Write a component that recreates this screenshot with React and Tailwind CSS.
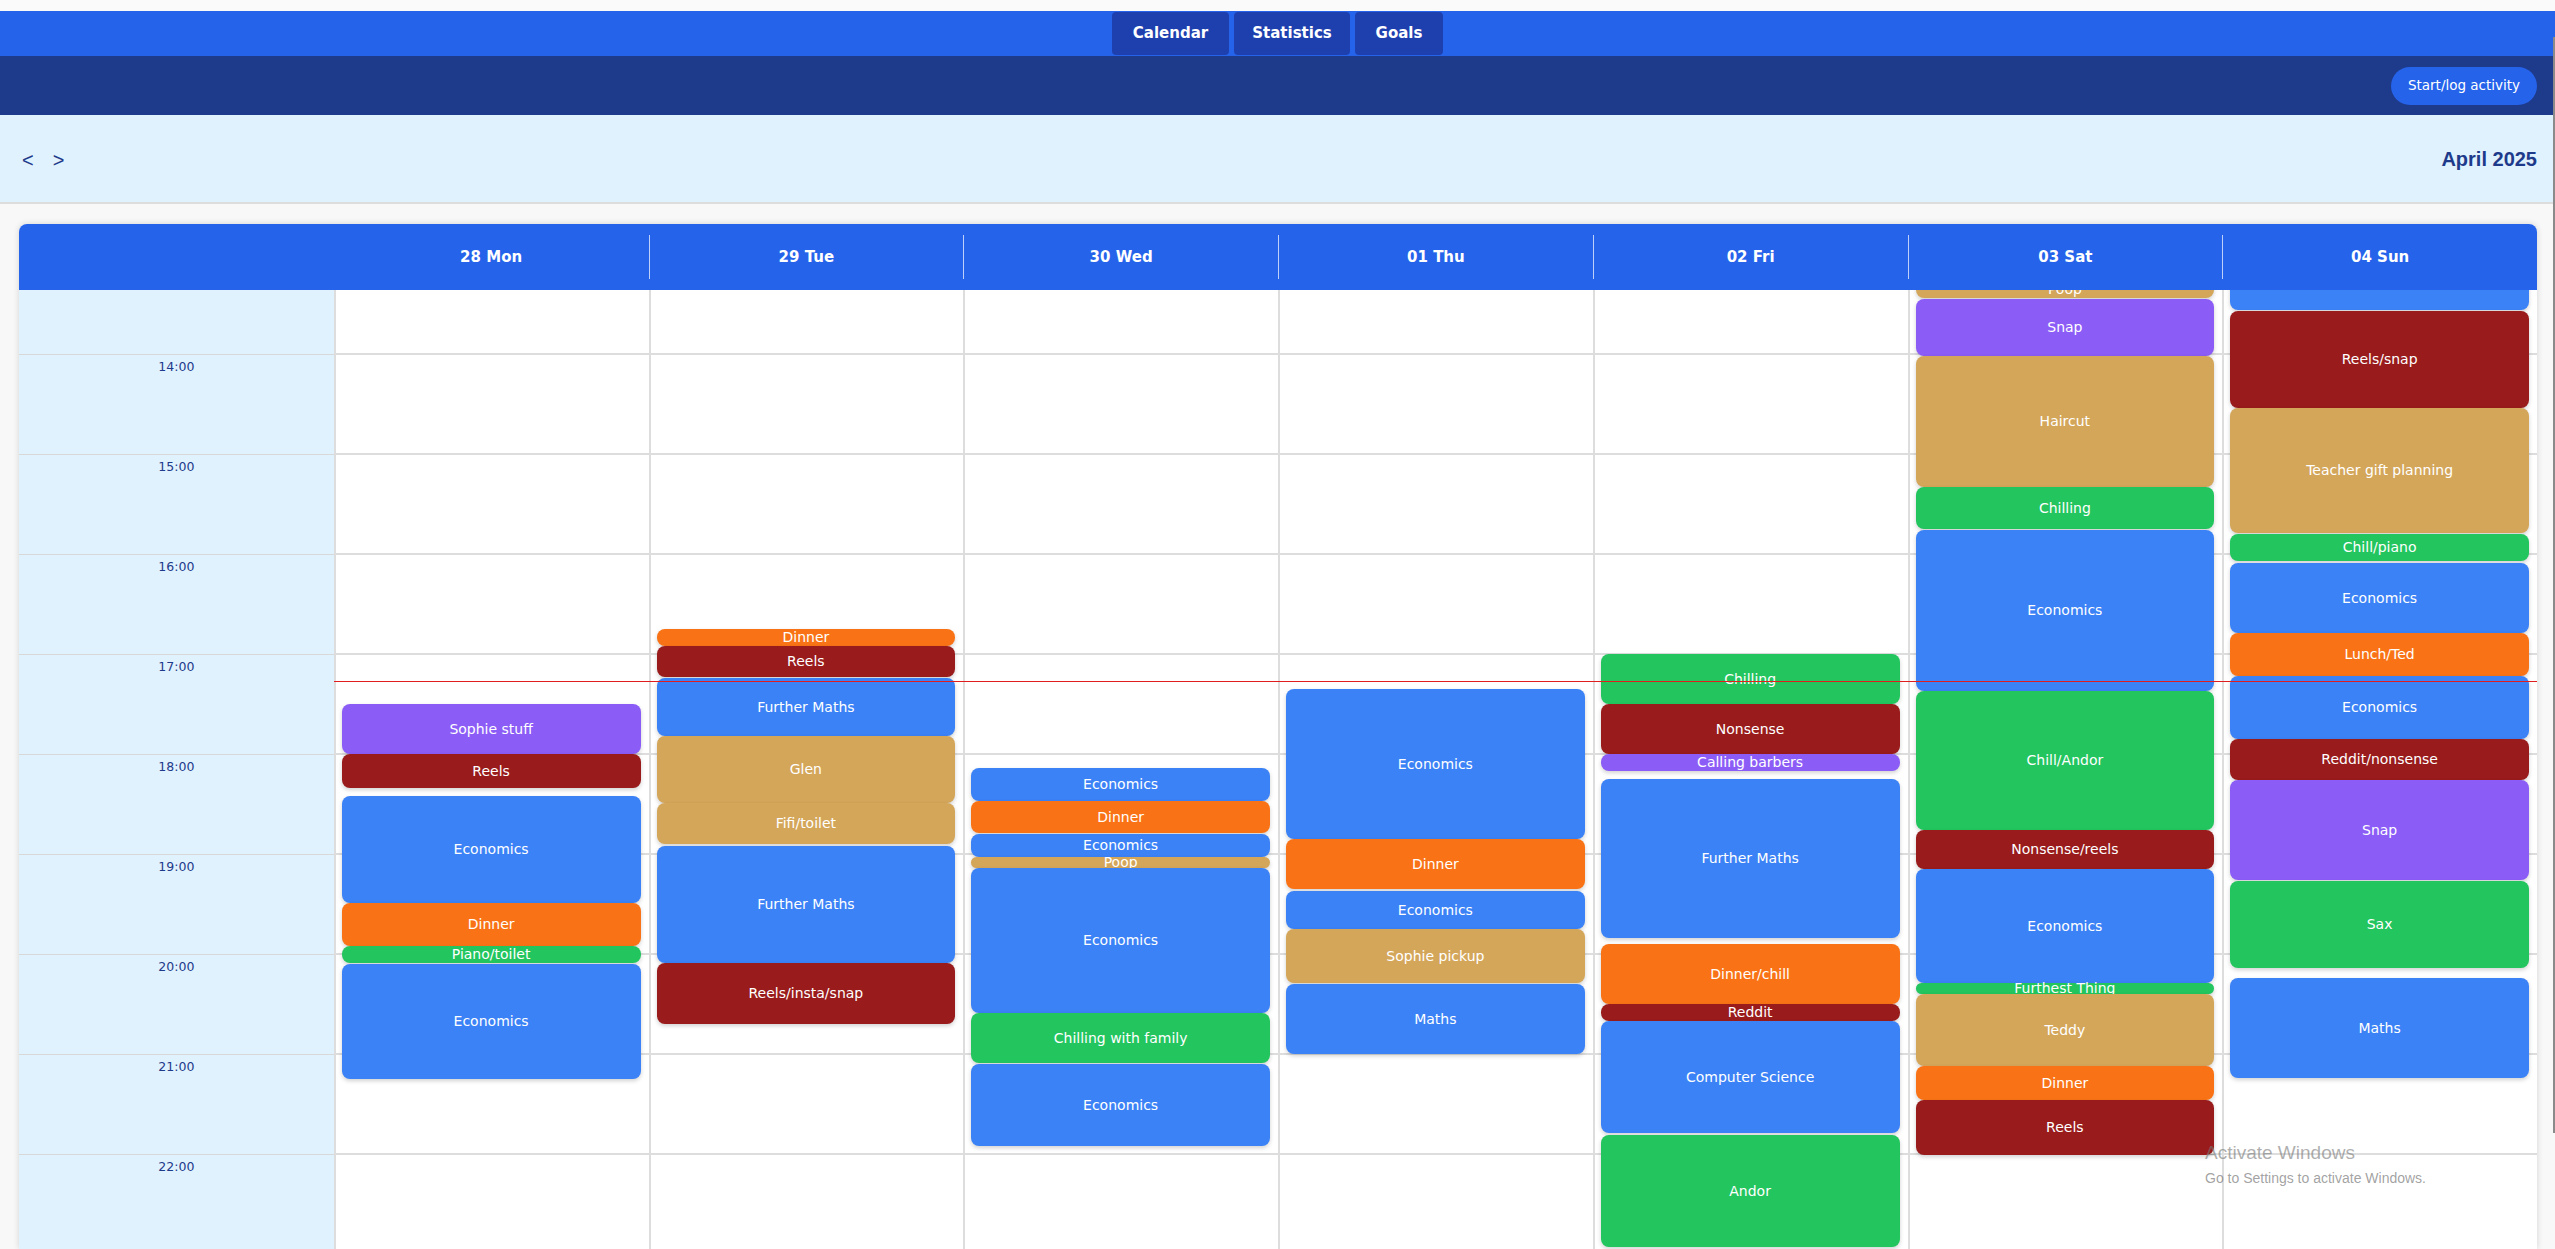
import React from "react";

const O = 255;

const COLORS = {
  blue: "bg-[#3b82f6]",
  orange: "bg-[#f97316]",
  green: "bg-[#22c55e]",
  purple: "bg-[#8b5cf6]",
  red: "bg-[#991b1b]",
  tan: "bg-[#d4a65a]",
};

const DAYS = [
  {
    label: "28 Mon",
    events: [
      ["Sophie stuff", "purple", 704, 754],
      ["Reels", "red", 754, 788],
      ["Economics", "blue", 796, 903],
      ["Dinner", "orange", 903, 946],
      ["Piano/toilet", "green", 946, 963],
      ["Economics", "blue", 964, 1079],
    ],
  },
  {
    label: "29 Tue",
    events: [
      ["Dinner", "orange", 629, 646],
      ["Reels", "red", 646, 677],
      ["Further Maths", "blue", 678, 736],
      ["Glen", "tan", 736, 803],
      ["Fifi/toilet", "tan", 803, 844],
      ["Further Maths", "blue", 846, 963],
      ["Reels/insta/snap", "red", 963, 1024],
    ],
  },
  {
    label: "30 Wed",
    events: [
      ["Economics", "blue", 768, 801],
      ["Dinner", "orange", 801, 833],
      ["Economics", "blue", 834, 857],
      ["Poop", "tan", 857, 868],
      ["Economics", "blue", 868, 1013],
      ["Chilling with family", "green", 1013, 1063],
      ["Economics", "blue", 1064, 1146],
    ],
  },
  {
    label: "01 Thu",
    events: [
      ["Economics", "blue", 689, 839],
      ["Dinner", "orange", 839, 889],
      ["Economics", "blue", 891, 929],
      ["Sophie pickup", "tan", 929, 983],
      ["Maths", "blue", 984, 1054],
    ],
  },
  {
    label: "02 Fri",
    events: [
      ["Chilling", "green", 654, 704],
      ["Nonsense", "red", 704, 754],
      ["Calling barbers", "purple", 754, 771],
      ["Further Maths", "blue", 779, 938],
      ["Dinner/chill", "orange", 944, 1004],
      ["Reddit", "red", 1004, 1021],
      ["Computer Science", "blue", 1021, 1133],
      ["Andor", "green", 1135, 1247],
    ],
  },
  {
    label: "03 Sat",
    events: [
      ["Poop", "tan", 280, 298],
      ["Snap", "purple", 299, 356],
      ["Haircut", "tan", 356, 487],
      ["Chilling", "green", 487, 529],
      ["Economics", "blue", 530, 691],
      ["Chill/Andor", "green", 691, 830],
      ["Nonsense/reels", "red", 830, 869],
      ["Economics", "blue", 869, 983],
      ["Furthest Thing", "green", 983, 994],
      ["Teddy", "tan", 994, 1066],
      ["Dinner", "orange", 1066, 1100],
      ["Reels", "red", 1100, 1155],
    ],
  },
  {
    label: "04 Sun",
    events: [
      ["", "blue", 240, 310],
      ["Reels/snap", "red", 311, 408],
      ["Teacher gift planning", "tan", 408, 533],
      ["Chill/piano", "green", 534, 561],
      ["Economics", "blue", 563, 633],
      ["Lunch/Ted", "orange", 633, 676],
      ["Economics", "blue", 676, 739],
      ["Reddit/nonsense", "red", 739, 780],
      ["Snap", "purple", 780, 880],
      ["Sax", "green", 881, 968],
      ["Maths", "blue", 978, 1078],
    ],
  },
];

const HOURS = [13, 14, 15, 16, 17, 18, 19, 20, 21, 22, 23];

function Event({ e }) {
  const [label, color, top, bottom] = e;
  return (
    <div
      className={`absolute left-[6px] right-[8px] rounded-[8px] ${COLORS[color]} flex items-center justify-center text-white text-[14px] leading-[17px] whitespace-nowrap shadow-[0_2px_4px_rgba(0,0,0,0.18)]`}
      style={{ top: top - O, height: bottom - top }}
    >
      {label}
    </div>
  );
}

export default function App() {
  return (
    <div className="relative h-screen overflow-hidden bg-[#f8f8f8] flex flex-col [font-family:'DejaVu_Sans',sans-serif]">
      <div className="h-[11px] shrink-0 bg-[#fafafa]" />
      <nav className="h-[45px] shrink-0 bg-[#2563eb] flex justify-center items-start pt-px gap-[5px]">
        <button className="h-[43px] w-[117px] rounded-[4px] bg-[#1e40af] text-white font-bold text-[15px]">Calendar</button>
        <button className="h-[43px] w-[116px] rounded-[4px] bg-[#1e40af] text-white font-bold text-[15px]">Statistics</button>
        <button className="h-[43px] w-[88px] rounded-[4px] bg-[#1e40af] text-white font-bold text-[15px]">Goals</button>
      </nav>
      <div className="h-[59px] shrink-0 bg-[#1e3a8a] flex items-center justify-end pr-[18px]">
        <button className="h-[38px] w-[146px] rounded-full bg-[#2563eb] text-white text-[13.5px]">Start/log activity</button>
      </div>
      <div className="h-[89px] shrink-0 bg-[#e0f2fe] border-b-2 border-[#dddddd] flex items-center justify-between pl-[22px] pr-[18px]">
        <div className="flex items-center gap-[19px] text-[#1e3a8a] text-[20px] pt-[2px] [font-family:'Liberation_Sans',sans-serif]">
          <button>&lt;</button>
          <button>&gt;</button>
        </div>
        <div className="text-[#1e3a8a] font-bold text-[20px] [font-family:'Liberation_Sans',sans-serif]">April 2025</div>
      </div>
      <div className="flex-1 min-h-0 pt-[20px] pl-[19px] pr-[18px]">
        <div className="h-full flex flex-col rounded-t-[8px] bg-white shadow-[0_0_6px_rgba(0,0,0,0.15)] overflow-hidden">
          <div className="h-[66px] shrink-0 grid grid-cols-8 bg-[#2563eb]">
            <div />
            {DAYS.map((d, i) => (
              <div
                key={d.label}
                className={`my-[11px] flex items-center justify-center text-white font-bold text-[15px] ${i > 0 ? "border-l border-white/70" : ""}`}
              >
                {d.label}
              </div>
            ))}
          </div>
          <div className="flex-1 min-h-0 overflow-hidden">
            <div className="-mt-[35px] grid grid-cols-8 relative">
              <div className="bg-[#e0f2fe]">
                {HOURS.map((h) => (
                  <div key={h} className="h-[100px] border-b border-[#d8d8d8] flex justify-center pt-[2px]">
                    {h > 13 && h < 23 ? (
                      <span className="text-[12.5px] leading-[20px] text-[#1e3a8a]">{h}:00</span>
                    ) : null}
                  </div>
                ))}
              </div>
              {DAYS.map((d) => (
                <div key={d.label} className="relative bg-white border-l-2 border-[#dddddd]">
                  {HOURS.map((h) => (
                    <div key={h} className="h-[100px] border-b-2 border-[#dddddd]" />
                  ))}
                  {d.events.map((e, k) => (
                    <Event key={k} e={e} />
                  ))}
                </div>
              ))}
              <div className="absolute left-[12.5%] right-0 top-[426px] h-px bg-[#e11d1d] z-10" />
            </div>
          </div>
        </div>
      </div>
      <div className="absolute z-20 left-[2205px] top-[1141px] pointer-events-none [font-family:'Liberation_Sans',sans-serif]">
        <div className="text-[19px] leading-[24px] text-[rgba(120,120,120,0.6)]">Activate Windows</div>
        <div className="text-[14px] leading-[18px] mt-[4px] text-[rgba(110,110,110,0.65)]">Go to Settings to activate Windows.</div>
      </div>
      <div className="absolute right-0 top-[37px] h-[1096px] w-[2px] bg-[#8a8a8a]" />
    </div>
  );
}
